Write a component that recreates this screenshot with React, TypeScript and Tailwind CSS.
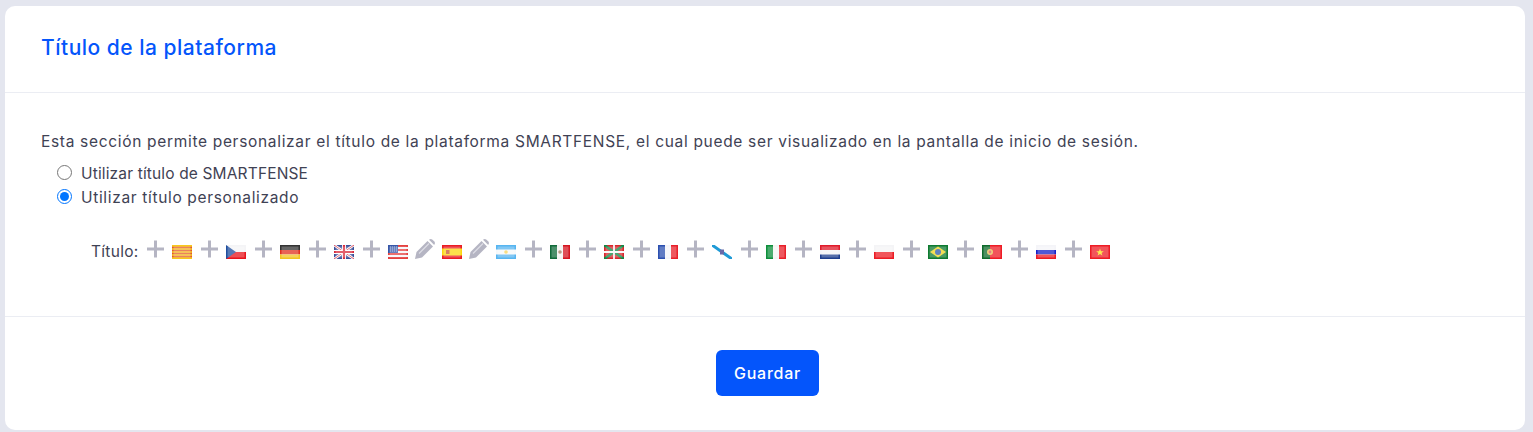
const Plus = () => (
    <svg width="17" height="18" viewBox="0 0 17 18" className="block blur-[0.3px]">
        <path d="M8.5 0.5v17M0 9h17" stroke="#b5b5c3" strokeWidth="3" fill="none" />
    </svg>
);

const Pencil = () => (
    <svg width="22" height="22" viewBox="0 0 22 22" className="block blur-[0.3px]">
        <path d="M2.5 14 L13.5 3 L19 8.5 L8 19.5 L1 21 Z" fill="#b5b5c3" />
        <path d="M15 1.8 Q16.6 0.4 18.2 1.4 L20.6 3.8 Q21.6 5.4 20.2 7 L15 1.8 Z" fill="#b5b5c3" />
        <path d="M5 15.5 L15 5.5" stroke="#dcdce4" strokeWidth="1.2" />
    </svg>
);

// each flag is a 20x14 tile, the gloss is laid on top
const flagArt: Record<string, React.ReactNode> = {
    ca: (
        <>
            <rect width="20" height="14" fill="#f7c81e" />
            <path d="M0 2.5h20M0 5.5h20M0 8.5h20M0 11.5h20" stroke="#e2572a" strokeWidth="1.5" />
        </>
    ),
    cz: (
        <>
            <rect width="20" height="7" fill="#f4f4f6" />
            <rect y="7" width="20" height="7" fill="#e8141c" />
            <path d="M0 0L10 7L0 14Z" fill="#1f4e9e" />
        </>
    ),
    de: (
        <>
            <rect width="20" height="5" fill="#333" />
            <rect y="5" width="20" height="4.5" fill="#e0301e" />
            <rect y="9.5" width="20" height="4.5" fill="#f2c522" />
        </>
    ),
    gb: (
        <>
            <rect width="20" height="14" fill="#3a4f9a" />
            <path d="M0 0L20 14M20 0L0 14" stroke="#fff" strokeWidth="2.6" />
            <path d="M0 0L20 14M20 0L0 14" stroke="#d8384a" strokeWidth="0.9" />
            <path d="M10 0v14M0 7h20" stroke="#fff" strokeWidth="4" />
            <path d="M10 0v14M0 7h20" stroke="#d8283a" strokeWidth="2.2" />
        </>
    ),
    us: (
        <>
            <rect width="20" height="14" fill="#f6f6f8" />
            <path d="M0 1h20M0 5h20M0 9h20M0 13h20" stroke="#e4413f" strokeWidth="1.8" />
            <rect width="10" height="8" fill="#3757a8" />
            <path d="M2 2h7M2 4h7M2 6h7" stroke="#c8d4f0" strokeWidth="0.8" strokeDasharray="1 1" />
        </>
    ),
    es: (
        <>
            <rect width="20" height="14" fill="#ea1c24" />
            <rect y="3.5" width="20" height="7" fill="#fbd70f" />
            <rect x="4" y="5" width="3.5" height="4" fill="#c8562a" />
        </>
    ),
    ar: (
        <>
            <rect width="20" height="14" fill="#57b5f0" />
            <rect y="4.5" width="20" height="5" fill="#f6f8fa" />
            <circle cx="10" cy="7" r="1.8" fill="#f5d35a" />
        </>
    ),
    mx: (
        <>
            <rect width="7" height="14" fill="#116b3a" />
            <rect x="7" width="6" height="14" fill="#f4f4f2" />
            <rect x="13" width="7" height="14" fill="#d5151f" />
            <circle cx="10" cy="7" r="1.8" fill="#a0785a" />
        </>
    ),
    eu: (
        <>
            <rect width="20" height="14" fill="#d8262c" />
            <path d="M0 0L20 14M20 0L0 14" stroke="#0b8a45" strokeWidth="2.6" />
            <path d="M10 0v14M0 7h20" stroke="#f6f6f6" strokeWidth="1.8" />
        </>
    ),
    fr: (
        <>
            <rect width="7" height="14" fill="#2c50b0" />
            <rect x="7" width="6" height="14" fill="#f4f4f8" />
            <rect x="13" width="7" height="14" fill="#e8202a" />
        </>
    ),
    gl: (
        <>
            <path d="M0 0L20 14" stroke="#1f9ad6" strokeWidth="3" />
            <rect x="8" y="4.5" width="4" height="5" fill="#6a6aa8" />
        </>
    ),
    it: (
        <>
            <rect width="7" height="14" fill="#0e8f3c" />
            <rect x="7" width="6" height="14" fill="#f4f4f2" />
            <rect x="13" width="7" height="14" fill="#e8202a" />
        </>
    ),
    nl: (
        <>
            <rect width="20" height="5" fill="#e01b2b" />
            <rect y="5" width="20" height="4.5" fill="#f4f4f6" />
            <rect y="9.5" width="20" height="4.5" fill="#1f3f8e" />
        </>
    ),
    pl: (
        <>
            <rect width="20" height="7" fill="#f4f4f6" />
            <rect y="7" width="20" height="7" fill="#ec1c24" />
        </>
    ),
    br: (
        <>
            <rect width="20" height="14" fill="#0e7a30" />
            <path d="M10 1.5L18 7L10 12.5L2 7Z" fill="#f0d41c" />
            <circle cx="10" cy="7" r="3" fill="#2d5aa8" />
        </>
    ),
    pt: (
        <>
            <rect width="8" height="14" fill="#0f6b2c" />
            <rect x="8" width="12" height="14" fill="#ee1c25" />
            <circle cx="8" cy="7" r="3" fill="#e8c050" />
            <circle cx="8" cy="7" r="1.4" fill="#d8585a" />
        </>
    ),
    ru: (
        <>
            <rect width="20" height="5" fill="#f4f4f8" />
            <rect y="5" width="20" height="4.5" fill="#1420c8" />
            <rect y="9.5" width="20" height="4.5" fill="#ec1c24" />
        </>
    ),
    vn: (
        <>
            <rect width="20" height="14" fill="#ee1c25" />
            <path d="M10 3.5L11 6.2H13.8L11.6 7.9L12.4 10.6L10 9L7.6 10.6L8.4 7.9L6.2 6.2H9Z" fill="#fbe216" />
        </>
    ),
};

const Flag = ({ code }: { code: string }) => (
    <svg width="20" height="14" viewBox="0 0 20 14" className="block blur-[0.3px]">
        {flagArt[code]}
        {code !== "gl" && <rect x="1.5" y="1.5" width="17" height="11" fill="#fff" opacity="0.25" />}
    </svg>
);

const translations = [
    { code: "ca", done: false },
    { code: "cz", done: false },
    { code: "de", done: false },
    { code: "gb", done: false },
    { code: "us", done: false },
    { code: "es", done: true },
    { code: "ar", done: true },
    { code: "mx", done: false },
    { code: "eu", done: false },
    { code: "fr", done: false },
    { code: "gl", done: false },
    { code: "it", done: false },
    { code: "nl", done: false },
    { code: "pl", done: false },
    { code: "br", done: false },
    { code: "pt", done: false },
    { code: "ru", done: false },
    { code: "vn", done: false },
];

export default function App() {
    return (
        <div className="h-[432px] bg-[#e4e6ef] pt-[6px] pl-[5px] pr-[8px] pb-[2px] overflow-hidden font-['Inter',sans-serif]">
            <div className="bg-white rounded-[10px] h-full flex flex-col">
                <div className="h-[87px] shrink-0 border-b border-[#ebedf3] px-[36px] pb-[2px] flex items-center">
                    <h3 className="text-[21px] font-medium text-[#0455fb] tracking-[0.5px]">Título de la plataforma</h3>
                </div>
                <div className="h-[224px] shrink-0 border-b border-[#ebedf3] px-[36px] pt-[37px] text-[#3f4254] text-[15.5px]">
                    <p className="leading-[23px] tracking-[0.68px]">
                        Esta sección permite personalizar el título de la plataforma SMARTFENSE, el cual puede ser visualizado en la pantalla de inicio de sesión.
                    </p>
                    <div className="mt-[8px] pl-[16px] flex flex-col">
                        <label className="flex items-center gap-[9px] h-[24.5px] tracking-[0.15px]">
                            <input type="radio" name="titulo" className="w-[15px] h-[15px] m-0 -mt-[2px]" />
                            Utilizar título de SMARTFENSE
                        </label>
                        <label className="flex items-center gap-[9px] h-[24.5px] tracking-[0.66px]">
                            <input type="radio" name="titulo" defaultChecked className="w-[15px] h-[15px] m-0 -mt-[2px]" />
                            Utilizar título personalizado
                        </label>
                    </div>
                    <div className="mt-[29px] pl-[50px] flex items-center h-[26px]">
                        <span className="w-[50.5px] shrink-0 tracking-[0.3px]">Título:</span>
                        {translations.map((t) => (
                            <div key={t.code} className="flex items-center">
                                <div className="w-[27px] flex justify-center pb-[6px]">{t.done ? <Pencil /> : <Plus />}</div>
                                <div className="w-[27px] flex justify-center">
                                    <Flag code={t.code} />
                                </div>
                            </div>
                        ))}
                    </div>
                </div>
                <div className="flex-1 flex justify-center pt-[33px] pl-[5px]">
                    <button className="w-[103px] h-[46px] rounded-[6px] bg-[#0455fb] text-white text-[16px] font-medium tracking-[0.75px]">
                        Guardar
                    </button>
                </div>
            </div>
        </div>
    );
}
